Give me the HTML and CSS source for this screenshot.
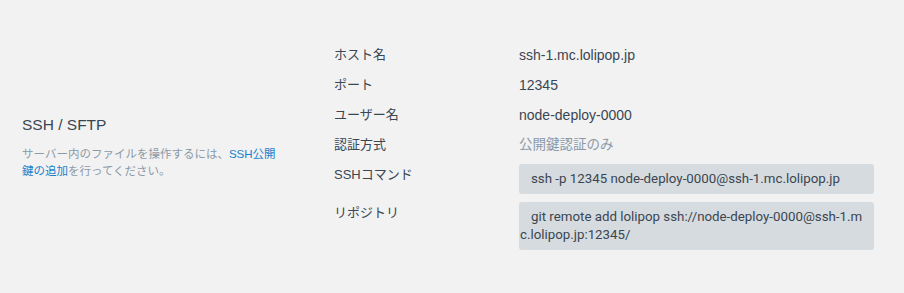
FILE: index.html
```html
<!DOCTYPE html>
<html lang="ja">
<head>
  <meta charset="UTF-8" />
  <title>SSH / SFTP</title>
  <link rel="stylesheet" href="styles.css">
</head>
<body>

<div class="setting-section">
  <div class="setting-intro">
    <div class="setting-title">SSH / SFTP</div>
    <p class="setting-desc">サーバー内のファイルを操作するには、<a href="#" class="desc-link">SSH公開鍵の追加</a>を行ってください。</p>
  </div>

  <div class="field-list">
    <div class="field">
      <div class="field-label">ホスト名</div>
      <div class="field-value">ssh-1.mc.lolipop.jp</div>
    </div>
    <div class="field">
      <div class="field-label">ポート</div>
      <div class="field-value">12345</div>
    </div>
    <div class="field">
      <div class="field-label">ユーザー名</div>
      <div class="field-value">node-deploy-0000</div>
    </div>
    <div class="field">
      <div class="field-label">認証方式</div>
      <div class="field-value muted">公開鍵認証のみ</div>
    </div>
    <div class="field field-code">
      <div class="field-label">SSHコマンド</div>
      <div class="code-box">ssh -p 12345 node-deploy-0000@ssh-1.mc.lolipop.jp</div>
    </div>
    <div class="field field-code">
      <div class="field-label">リポジトリ</div>
      <div class="code-box">git remote add lolipop ssh://node-deploy-0000@ssh-1.mc.lolipop.jp:12345/</div>
    </div>
  </div>
</div>

</body>
</html>
```

FILE: styles.css
```css
body {
  margin: 0;
  background: #f2f2f2;
  color: #3a4651;
  font-family: "Liberation Sans", "Noto Sans CJK JP", sans-serif;
}

.setting-section {
  display: flex;
  padding: 40px 0 43px 22px;
}

.setting-intro {
  width: 255px;
  margin-top: 4px;
  align-self: center;
}

.setting-title {
  font-size: 15.5px;
  line-height: 20px;
  margin-bottom: 11px;
}

.setting-desc {
  margin: 0;
  font-size: 11.5px;
  line-height: 17px;
  color: #8c9aa8;
}

.desc-link {
  color: #1b7fcb;
  text-decoration: none;
}

.field-list {
  margin-left: 57px;
}

.field {
  display: flex;
  line-height: 30px;
}

.field-label {
  width: 185px;
  font-size: 13px;
}

.field-value {
  font-size: 14px;
}

.field-value.muted {
  font-size: 13.5px;
  color: #8c9aa8;
}

.field-code {
  margin-top: 4px;
  line-height: 20px;
}

.field-code + .field-code {
  margin-top: 8px;
}

.field-code .field-label {
  padding-top: 1px;
}

.code-box {
  box-sizing: border-box;
  width: 355px;
  padding: 6px 2px 6px 1px;
  font-family: Roboto, "Liberation Sans", sans-serif;
  font-size: 13.3px;
  line-height: 18px;
  text-indent: 11px;
  word-break: break-all;
  background: #d6dbdf;
  border-radius: 3px;
}
```
